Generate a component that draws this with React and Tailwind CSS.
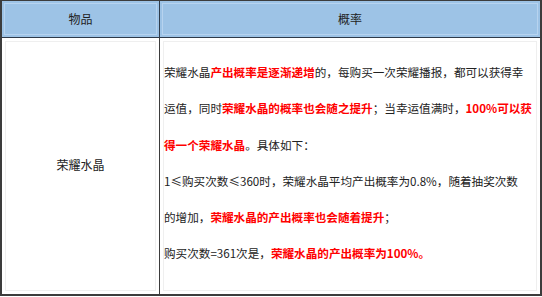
const R = ({ children }) => <span className="font-bold text-[#ff0000]">{children}</span>;

export default function App() {
    return (
        <div className="w-[542px] h-[297px] bg-white" style={{ fontFamily: '"Noto Sans CJK SC", "Noto Sans", sans-serif' }}>
            <div className="w-[542px] h-[296px] border-l-2 border-t border-r-2 border-b-2 border-[#3c3c3c] grid grid-cols-[158px_1fr] grid-rows-[37px_1fr] text-[12px] text-[#222]">
                <div className="bg-[#9dc3e6] border-r border-b border-[#2f3b4a] p-[2px]">
                    <div className="h-full border border-[#b7d3ef] flex items-center justify-center">物品</div>
                </div>
                <div className="bg-[#9dc3e6] border-b border-[#2f3b4a] p-[2px]">
                    <div className="h-full border border-[#b7d3ef] flex items-center justify-center">概率</div>
                </div>
                <div className="border-r border-[#3c3c3c] p-[3px]">
                    <div className="h-full border border-[#efefef] flex items-center justify-center pb-[2px]">荣耀水晶</div>
                </div>
                <div className="p-[3px]">
                    <div className="h-full border border-[#efefef] pt-[12px] text-[11.6px] leading-[36.3px] whitespace-nowrap">
                        荣耀水晶<R>产出概率是逐渐递增</R>的，每购买一次荣耀播报，都可以获得幸<br />
                        运值，同时<R>荣耀水晶的概率也会随之提升</R>；当幸运值满时，<R>100%可以获</R><br />
                        <R>得一个荣耀水晶</R>。具体如下：<br />
                        1≤购买次数≤360时，荣耀水晶平均产出概率为0.8%，随着抽奖次数<br />
                        的增加，<R>荣耀水晶的产出概率也会随着提升</R>；<br />
                        购买次数=361次是，<R>荣耀水晶的产出概率为100%。</R>
                    </div>
                </div>
            </div>
        </div>
    );
}
